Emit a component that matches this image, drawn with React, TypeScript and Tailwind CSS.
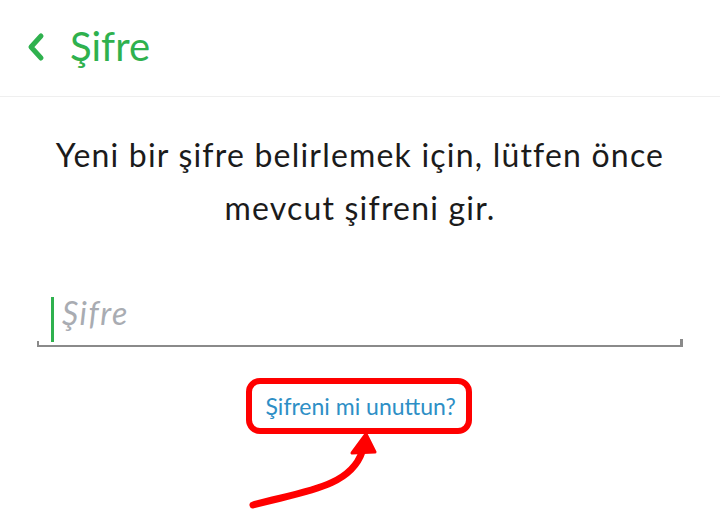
export default function App() {
  const font = { fontFamily: "Lato, 'Noto Sans', sans-serif" };
  return (
    <div className="relative h-[519px] w-[720px] overflow-hidden bg-white" style={font}>
      <header className="flex h-[97px] items-center border-b border-[#efefef] pl-[26px]">
        <svg width="20" height="30" viewBox="0 0 20 30" className="mt-[-2px]">
          <path d="M15 4 L5 15 L15 26" fill="none" stroke="#2fb14e" strokeWidth="5" strokeLinecap="round" strokeLinejoin="round" />
        </svg>
        <h1 className="ml-[24px] mt-[-4px] text-[40px] font-normal leading-none text-[#2fb14e]">Şifre</h1>
      </header>

      <p className="mx-auto mt-[31px] w-[660px] text-center text-[32px] leading-[53px] tracking-[1.2px] text-[#1b1b1b]">
        Yeni bir şifre belirlemek için, lütfen önce mevcut şifreni gir.
      </p>

      <div className="mx-[37px] mt-[59px]">
        <div className="relative flex h-[54px] items-center border-b-2 border-[#8a8a8a]">
          <span className="ml-[14px] h-[45px] w-[3px] bg-[#2fb14e]" />
          <span className="mb-[12px] ml-[8px] text-[32px] italic leading-none tracking-[1.5px] text-[#a9acb2]">Şifre</span>
          <span className="absolute bottom-[-2px] left-0 h-[6px] w-[2px] bg-[#8a8a8a]" />
          <span className="absolute bottom-[-2px] right-0 h-[8px] w-[3px] bg-[#8a8a8a]" />
        </div>
      </div>

      <div className="mt-[31px] flex justify-center">
        <div className="ml-[-3px] flex h-[56px] w-[226px] items-center rounded-[14px] border-[6px] border-[#ff0000] pl-[14px]">
          <span className="text-[23px] text-[#2e8fc6]">Şifreni mi unuttun?</span>
        </div>
      </div>

      <svg className="absolute left-0 top-0" width="720" height="519" viewBox="0 0 720 519">
        <path d="M253 505 C 300 492, 350 488, 362 452" fill="none" stroke="#ff0000" strokeWidth="7" strokeLinecap="round" />
        <path d="M366 434 L352 453 L375 452 Z" fill="#ff0000" stroke="#ff0000" strokeWidth="3" strokeLinejoin="round" />
      </svg>
    </div>
  );
}
